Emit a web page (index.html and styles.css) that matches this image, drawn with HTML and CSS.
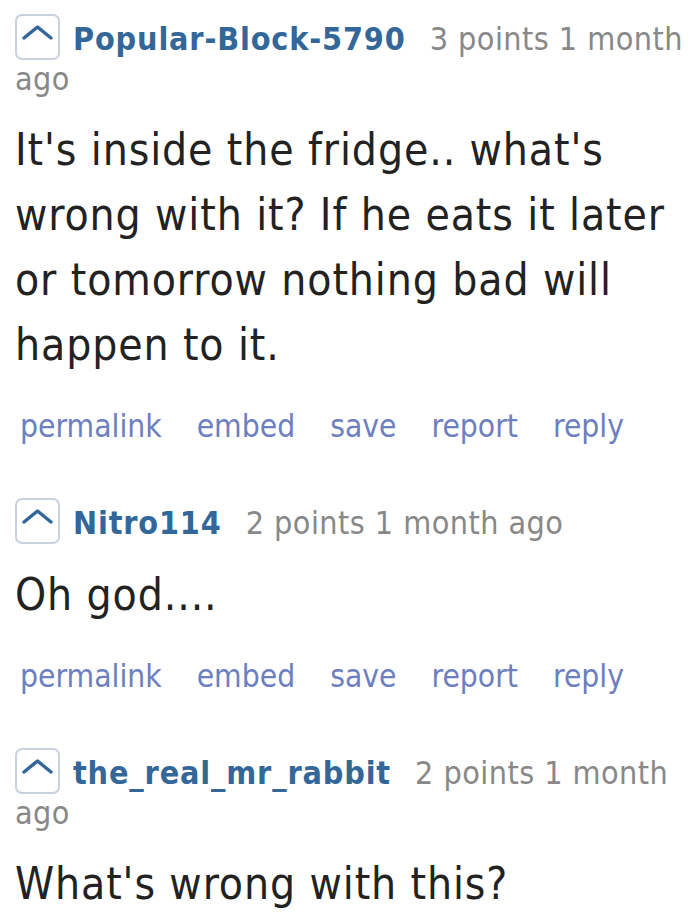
FILE: index.html
```html
<!DOCTYPE html>
<html lang="en">
<head>
<meta charset="utf-8">
<title>Comments</title>
<link rel="stylesheet" href="styles.css">
</head>
<body>
<div class="thread">
  <div class="comment">
    <div class="tagline">
      <span class="vote"><svg width="41" height="42" viewBox="0 0 41 42"><polyline points="7,22 20.5,11 34,22" fill="none" stroke="#336699" stroke-width="3.5" stroke-linecap="round" stroke-linejoin="round"/></svg></span><a class="author">Popular-Block-5790</a> <span class="meta">3 points 1 month ago</span>
    </div>
    <p class="body">It's inside the fridge.. what's wrong with it? If he eats it later or tomorrow nothing bad will happen to it.</p>
    <ul class="buttons">
      <li>permalink</li><li>embed</li><li>save</li><li>report</li><li>reply</li>
    </ul>
  </div>
  <div class="comment">
    <div class="tagline">
      <span class="vote"><svg width="41" height="42" viewBox="0 0 41 42"><polyline points="7,22 20.5,11 34,22" fill="none" stroke="#336699" stroke-width="3.5" stroke-linecap="round" stroke-linejoin="round"/></svg></span><a class="author">Nitro114</a> <span class="meta">2 points 1 month ago</span>
    </div>
    <p class="body">Oh god....</p>
    <ul class="buttons">
      <li>permalink</li><li>embed</li><li>save</li><li>report</li><li>reply</li>
    </ul>
  </div>
  <div class="comment">
    <div class="tagline">
      <span class="vote"><svg width="41" height="42" viewBox="0 0 41 42"><polyline points="7,22 20.5,11 34,22" fill="none" stroke="#336699" stroke-width="3.5" stroke-linecap="round" stroke-linejoin="round"/></svg></span><a class="author">the_real_mr_rabbit</a> <span class="meta">2 points 1 month ago</span>
    </div>
    <p class="body">What's wrong with this?</p>
  </div>
</div>
</body>
</html>
```

FILE: styles.css
```css
html, body {
  margin: 0;
  padding: 0;
  background: #ffffff;
}

body {
  font-family: "DejaVu Sans Condensed", "DejaVu Sans", sans-serif;
  color: #222222;
}

.thread {
  padding: 14px 8px 0 15px;
}

.comment + .comment {
  margin-top: 52px;
}

.tagline {
  font-size: 32px;
  line-height: 39px;
  color: #888888;
}

.vote {
  display: inline-block;
  width: 41px;
  height: 42px;
  border: 2px solid #c9d1de;
  border-radius: 7px;
  vertical-align: -10px;
  margin-right: 13px;
  box-sizing: content-box;
}

.vote svg {
  display: block;
}

.author {
  font-weight: bold;
  color: #336699;
  letter-spacing: 0.85px;
  margin-right: 15px;
}

.meta {
  color: #888888;
  letter-spacing: 0.45px;
}

.body {
  margin: 18px 0 0 0;
  font-size: 44px;
  line-height: 65px;
  letter-spacing: 0.9px;
  color: #222222;
}

.buttons {
  list-style: none;
  margin: 30px 0 0 0;
  padding: 0 0 0 5px;
  display: flex;
  gap: 35px;
  font-size: 31.5px;
  line-height: 39px;
  color: #6d7fbf;
}
```
